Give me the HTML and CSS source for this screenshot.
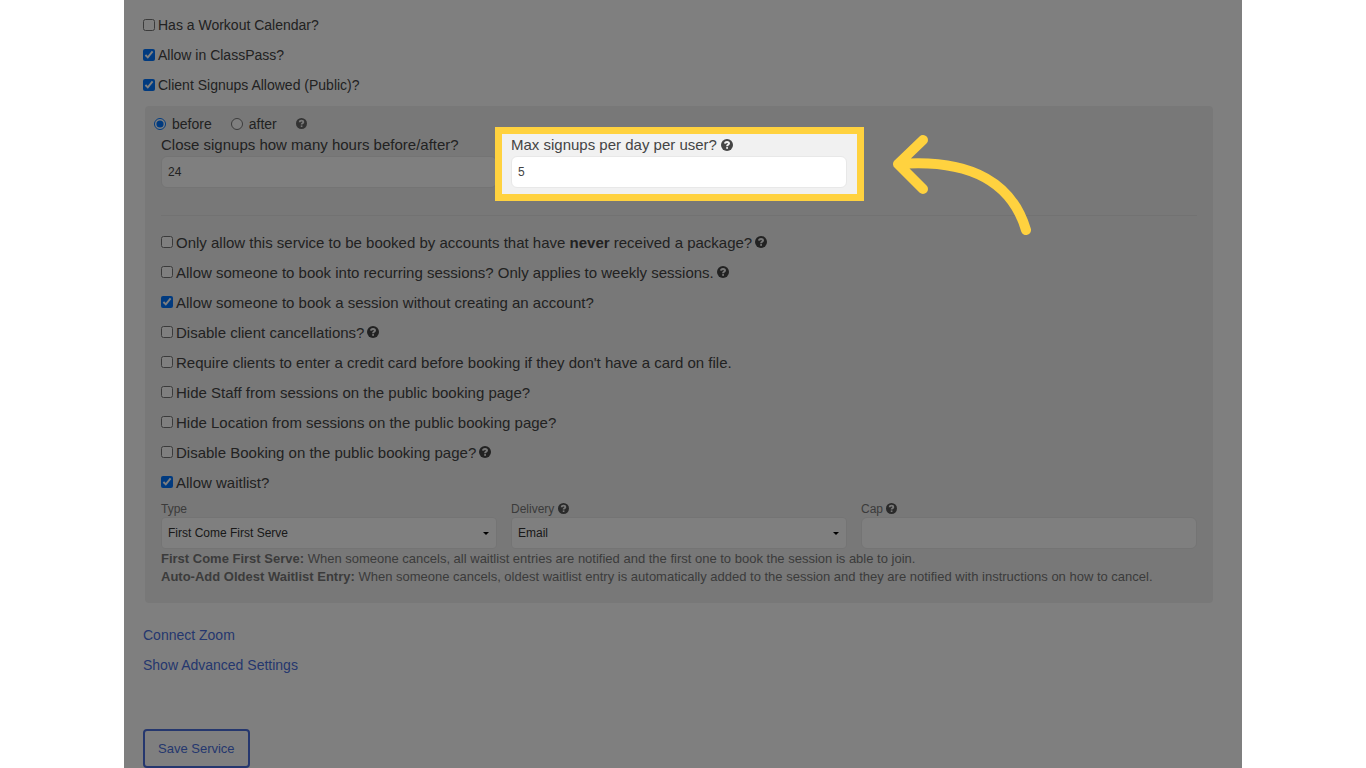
FILE: index.html
```html
<!DOCTYPE html>
<html lang="en">
<head>
  <meta charset="UTF-8" />
  <meta name="viewport" content="width=device-width, initial-scale=1.0"/>
  <title>Edit Service</title>
  <link rel="stylesheet" href="styles.css">
</head>
<body>
  <svg class="sprite" aria-hidden="true">
    <symbol id="help" viewBox="0 0 12 12">
      <circle cx="6" cy="6" r="6" fill="currentColor"/>
      <path class="hook" d="M4 4.6C4.1 2.3 8 2.3 8 4.6C8 5.8 6.1 5.8 6.1 7.2"/>
      <rect class="dot" x="5.2" y="8.1" width="1.8" height="1.7"/>
    </symbol>
  </svg>

  <form class="service" onsubmit="return false">
    <label class="check"><input type="checkbox"> Has a Workout Calendar?</label>
    <label class="check"><input type="checkbox" checked> Allow in ClassPass?</label>
    <label class="check"><input type="checkbox" checked> Client Signups Allowed (Public)?</label>

    <div class="panel">
      <div class="radios">
        <label class="radio"><input type="radio" name="close" checked> before</label>
        <label class="radio"><input type="radio" name="close"> after</label>
        <svg class="help small"><use href="#help"/></svg>
      </div>

      <div class="columns">
        <div class="field">
          <label for="hours">Close signups how many hours before/after?</label>
          <input type="text" id="hours" value="24">
        </div>
        <div class="field spotlight">
          <label for="max">Max signups per day per user? <svg class="help"><use href="#help"/></svg></label>
          <input type="text" id="max" value="5">
          <svg class="arrow" viewBox="0 0 140 102" aria-hidden="true">
            <path d="M133 96C120 52 82 24 5 30M30 6L5 30L30 55"/>
          </svg>
        </div>
      </div>

      <hr>

      <label class="check"><input type="checkbox"> <span>Only allow this service to be booked by accounts that have <b>never</b> received a package?</span> <svg class="help"><use href="#help"/></svg></label>
      <label class="check"><input type="checkbox"> Allow someone to book into recurring sessions? Only applies to weekly sessions. <svg class="help"><use href="#help"/></svg></label>
      <label class="check"><input type="checkbox" checked> Allow someone to book a session without creating an account?</label>
      <label class="check"><input type="checkbox"> Disable client cancellations? <svg class="help"><use href="#help"/></svg></label>
      <label class="check"><input type="checkbox"> Require clients to enter a credit card before booking if they don't have a card on file.</label>
      <label class="check"><input type="checkbox"> Hide Staff from sessions on the public booking page?</label>
      <label class="check"><input type="checkbox"> Hide Location from sessions on the public booking page?</label>
      <label class="check"><input type="checkbox"> Disable Booking on the public booking page? <svg class="help"><use href="#help"/></svg></label>
      <label class="check"><input type="checkbox" checked> Allow waitlist?</label>

      <div class="columns waitlist">
        <div class="field">
          <label for="type">Type</label>
          <div class="select">
            <select id="type">
              <option>First Come First Serve</option>
              <option>Auto-Add Oldest Waitlist Entry</option>
            </select>
          </div>
        </div>
        <div class="field">
          <label for="delivery">Delivery <svg class="help small"><use href="#help"/></svg></label>
          <div class="select">
            <select id="delivery">
              <option>Email</option>
            </select>
          </div>
        </div>
        <div class="field">
          <label for="cap">Cap <svg class="help small"><use href="#help"/></svg></label>
          <input type="text" id="cap">
        </div>
      </div>

      <p class="note"><b>First Come First Serve:</b> When someone cancels, all waitlist entries are notified and the first one to book the session is able to join.</p>
      <p class="note"><b>Auto-Add Oldest Waitlist Entry:</b> When someone cancels, oldest waitlist entry is automatically added to the session and they are notified with instructions on how to cancel.</p>
    </div>

    <div class="links">
      <a href="#">Connect Zoom</a>
      <a href="#">Show Advanced Settings</a>
    </div>

    <button class="save">Save Service</button>
  </form>
</body>
</html>
```

FILE: styles.css
```css
* {
  box-sizing: border-box;
}

body {
  margin: 0;
  background-color: #fff;
  font-family: "Liberation Sans", Arial, sans-serif;
  font-size: 14px;
  color: #444;
}

.sprite {
  position: absolute;
  width: 0;
  height: 0;
}

/* overflow clips the spotlight shade to the form */
.service {
  position: relative;
  overflow: hidden;
  max-width: 1118px;
  min-height: 100vh;
  margin: 0 auto;
  padding: 10px 29px 0 19px;
  background-color: #fff;
}

.check {
  display: flex;
  align-items: center;
  gap: 3px;
  height: 30px;
}

.check input {
  width: 12px;
  height: 12px;
  margin: 0;
}

.help {
  width: 12px;
  height: 12px;
  color: #444;
  vertical-align: -1px;
}

.help.small {
  width: 11px;
  height: 11px;
}

.hook {
  fill: none;
  stroke: #f1f1f1;
  stroke-width: 2;
}

.dot {
  fill: #f1f1f1;
}

.panel {
  margin: 6px 0 0 2px;
  padding: 7px 16px 17px;
  border-radius: 4px;
  background-color: #f1f1f1;
}

.panel .check {
  font-size: 15px;
}

.radios {
  display: flex;
  align-items: center;
  gap: 19px;
  height: 21px;
  margin-left: -7px;
}

.radios .help {
  color: #666;
}

.radio {
  display: flex;
  align-items: center;
  gap: 6px;
}

.radio input {
  width: 12px;
  height: 12px;
  margin: 0;
}

.columns {
  display: grid;
  grid-template-columns: repeat(3, 1fr);
  gap: 14px;
}

.field label {
  display: block;
  margin-bottom: 1px;
  font-size: 15px;
  line-height: 21px;
}

.field input,
select {
  display: block;
  width: 100%;
  height: 32px;
  padding: 0 6px;
  border: 1px solid #e8e8e8;
  border-radius: 6px;
  background-color: #fff;
  font-family: inherit;
  font-size: 12px;
  color: #444;
}

.spotlight {
  position: relative;
}

.spotlight::before {
  content: "";
  position: absolute;
  z-index: 1;
  inset: -7px -17px -13px -16px;
  border: 7px solid #ffd23f;
  box-shadow: 0 0 0 2000px rgba(0, 0, 0, 0.5);
  pointer-events: none;
}

.arrow {
  position: absolute;
  z-index: 2;
  top: 0;
  left: calc(100% + 46px);
  width: 140px;
  height: 102px;
  fill: none;
  stroke: #ffd23f;
  stroke-width: 10;
  stroke-linecap: round;
  stroke-linejoin: round;
}

hr {
  height: 1px;
  margin: 27px 0 11px;
  border: 0;
  background-color: #e4e4e4;
}

.waitlist {
  margin: 4px 0 1px;
}

.waitlist label {
  margin-bottom: 0;
  font-size: 12px;
  line-height: 16px;
  color: #777;
}

.waitlist .help {
  color: #555;
}

.select {
  position: relative;
}

.select::after {
  content: "";
  position: absolute;
  top: 15px;
  right: 8px;
  border: 3px solid transparent;
  border-top-color: #000;
  border-bottom: 0;
}

select {
  appearance: none;
  border-radius: 4px;
  color: #333;
}

.note {
  margin: 0;
  font-size: 13px;
  line-height: 18px;
  color: #777;
}

.links {
  display: flex;
  flex-direction: column;
  align-items: flex-start;
  margin-top: 17px;
}

.links a {
  line-height: 30px;
  color: #4a6fdc;
  text-decoration: none;
}

.save {
  display: block;
  height: 39px;
  margin-top: 49px;
  padding: 0 13px;
  border: 2px solid #4a6fdc;
  border-radius: 4px;
  background-color: transparent;
  font-family: inherit;
  font-size: 13px;
  color: #4a6fdc;
}
```
